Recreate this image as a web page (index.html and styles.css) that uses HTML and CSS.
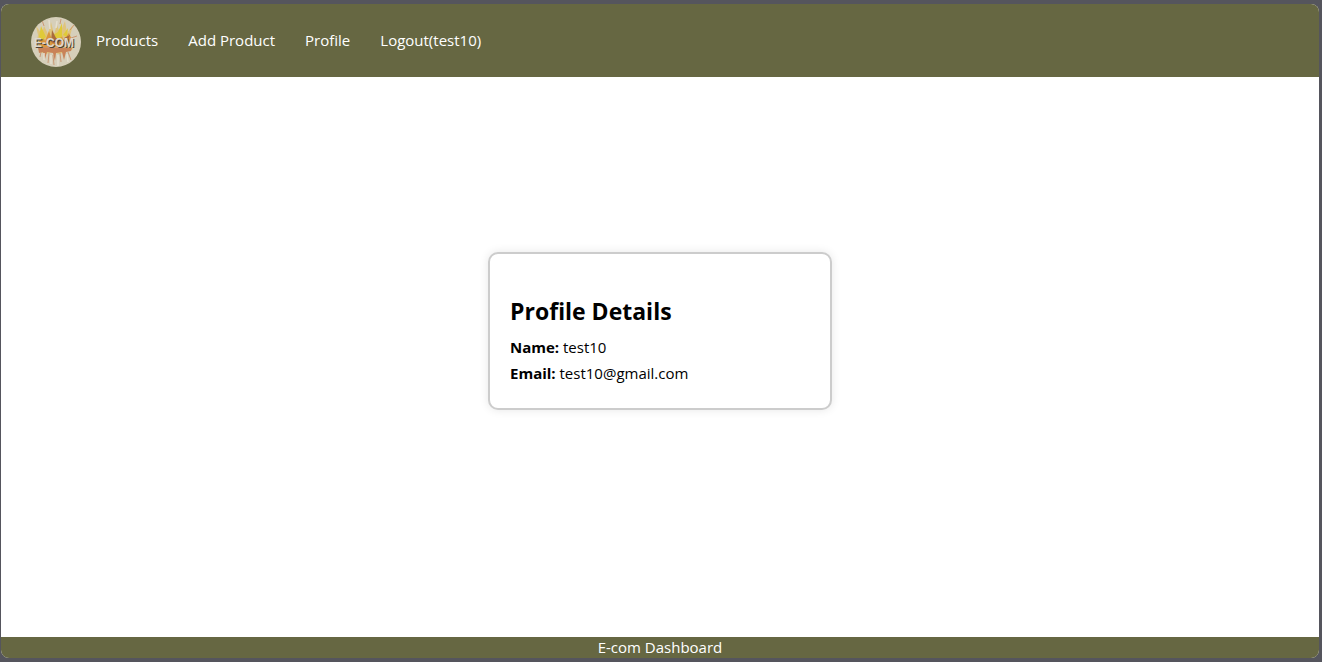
FILE: index.html
```html
<!DOCTYPE html>
<html lang="en">
<head>
<meta charset="utf-8">
<title>E-com Dashboard</title>
<link rel="stylesheet" href="styles.css">
</head>
<body>
<div class="app">
  <header class="navbar">
    <svg class="logo" viewBox="0 0 50 50" role="img" aria-label="E-COM">
      <defs>
        <clipPath id="disc"><circle cx="25" cy="25" r="25"/></clipPath>
        <filter id="soft" x="-20%" y="-20%" width="140%" height="140%"><feGaussianBlur stdDeviation="0.7"/></filter>
      </defs>
      <g clip-path="url(#disc)">
        <rect width="50" height="50" fill="#d6cfba"/>
        <g filter="url(#soft)">
          <path fill="#dfc47c" d="M5 28 7 18 5 9l6 8 2-8 4 8 3-12 3 12 3-9 3 8 5-12 2 12 6-8-3 11 5 8-3 6-7 2-6 2-7-2-6 2-6-2z"/>
          <path fill="#d9963e" d="m7 26 5-7 2 5 4-10 3 9 9-9 2 9 6-7 4 9-2 5H8z"/>
          <path fill="#e0ca38" d="m8 20 2-11 5 11-4 3zm14-2 5-3 4-9v14l-5 2zm10 0 5-7-1 9z"/>
          <path fill="#a96a3c" d="m21 13 4 8 5 3-3 4-7-3zM33 21l6-3-2 6z"/>
          <path fill="#c98358" d="m7 30 34 1-1 3-5 1-2 8-2-8-6 1-1 8-2-8-6-1-2 7-2-7-4 1z"/>
          <path fill="none" stroke="#c88a62" stroke-width="0.8" d="m10 35-1 5m9-4-1 10m5-8 1 10m6-12 1 9m7-10 3 8M13 9l-2-6m18 4 1-5m9 11 4-5m-3 13 6-2"/>
          <path fill="none" stroke="#e5dfcf" stroke-width="1.5" d="m18 3 1 9m7-8-1 7M13 36v7m7-5v9m7-9v11m9-12 1 8"/>
        </g>
        <text class="logo-shadow" x="24" y="31" text-anchor="middle">E-COM</text>
        <text class="logo-text" x="23" y="30" text-anchor="middle">E-COM</text>
      </g>
    </svg>
    <nav class="links">
      <a href="#products">Products</a>
      <a href="#add">Add Product</a>
      <a href="#profile">Profile</a>
      <a href="#logout">Logout(test10)</a>
    </nav>
  </header>
  <main class="content">
    <section class="card">
      <h1>Profile Details</h1>
      <p><strong>Name:</strong> test10</p>
      <p><strong>Email:</strong> test10@gmail.com</p>
    </section>
  </main>
  <footer class="footer">E-com Dashboard</footer>
</div>
</body>
</html>
```
FILE: styles.css
```css
* {
  box-sizing: border-box;
}

body {
  margin: 0;
  padding: 4px 3px 4px 1px;
  min-height: 100vh;
  display: flex;
  background: #55555d;
  color: #000;
  font: 15px/22px "Segoe UI", "Open Sans", "Noto Sans", sans-serif;
}

.app {
  flex: 1;
  display: flex;
  flex-direction: column;
  overflow: hidden;
  border-radius: 8px;
  background: #fff;
}

.navbar {
  display: flex;
  align-items: flex-start;
  gap: 15px;
  padding: 13px 30px 10px;
  background: #666742;
}

.logo {
  width: 50px;
  height: 50px;
  flex: none;
}

.logo-text,
.logo-shadow {
  font: bold 12px "Liberation Sans", sans-serif;
  fill: #ddd8cd;
}

.logo-shadow {
  fill: #4b413a;
}

.links {
  display: flex;
  flex-wrap: wrap;
  gap: 30px;
  padding-top: 12px;
}

.links a {
  color: #fff;
  text-decoration: none;
}

.content {
  flex: 1;
  display: flex;
  align-items: center;
  justify-content: center;
  padding: 20px 20px 72px;
}

.card {
  width: 344px;
  max-width: 100%;
  padding: 40px 20px 20px;
  border: 2px solid #ccc;
  border-radius: 10px;
  background: #fff;
  box-shadow: 0 0 10px rgba(0, 0, 0, 0.1);
}

.card h1 {
  margin: 0 0 8px;
  font-size: 23px;
  line-height: 34px;
}

.card p {
  margin: 0 0 4px;
}

.footer {
  background: #666742;
  color: #fff;
  line-height: 21px;
  text-align: center;
}
```
